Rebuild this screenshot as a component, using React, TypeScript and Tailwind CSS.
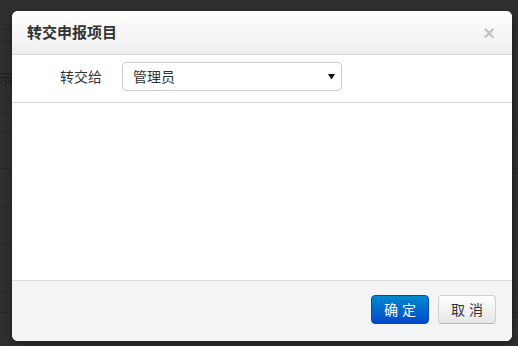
import type { ReactNode } from "react";

const FONT = { fontFamily: '"Noto Sans CJK SC", "Noto Sans", sans-serif' };

function BackdropRows(): ReactNode {
	// dimmed page behind the modal: just the row separators of a table
	return (
		<div className="flex flex-col w-full">
			<div className="h-[30px] border-b border-[#262626]" />
			<div className="h-[12px] border-b border-[#262626]" />
			<div className="h-[72px] border-b border-[#262626] pt-[28px] pl-[0px] relative">
				<span className="absolute left-[-15px] top-[26px] text-[14px] text-[#1e1e1e]">显示</span>
			</div>
			<div className="h-[18px] border-b border-[#262626]" />
			<div className="h-[37px] border-b border-[#262626]" />
			<div className="h-[38px] border-b border-[#262626]" />
			<div className="h-[38px] border-b border-[#262626]" />
			<div className="h-[48px] border-b border-[#262626]" />
			<div className="h-[20px] border-b border-[#262626]" />
		</div>
	);
}

export default function App(): ReactNode {
	return (
		<div className="relative w-[518px] h-[346px] overflow-hidden bg-[#2f2f2f]" style={FONT}>
			<BackdropRows />

			<div className="absolute left-[12px] top-[11px] w-[500px] h-[330px] flex flex-col bg-white rounded-[6px] overflow-hidden shadow-[0_3px_7px_rgba(0,0,0,0.4)]">
				{/* header */}
				<div className="h-[44px] flex items-center justify-between pl-[15px] pr-[17px] border-b border-[#d9d9d9] bg-gradient-to-b from-white to-[#eeeeee]">
					<h3 className="text-[15px] font-bold text-[#333]">转交申报项目</h3>
					<span
						className="text-[20px] font-bold leading-none text-[#c4c4c4]"
						style={{ fontFamily: '"Liberation Sans", sans-serif' }}
					>
						×
					</span>
				</div>

				{/* form row */}
				<div className="h-[48px] flex items-start pt-[7px] border-b border-[#d6d6d6]">
					<label className="w-[90px] h-[29px] flex items-center justify-end text-[14px] text-[#333]">
						转交给
					</label>
					<div className="ml-[20px] w-[220px] h-[29px] flex items-center justify-between pl-[10px] pr-[6px] border border-[#cccccc] rounded-[4px] bg-white">
						<span className="text-[14px] text-[#333]">管理员</span>
						<svg width="7" height="7" viewBox="0 0 7 7">
							<path d="M0 1 H7 L3.5 6.5 Z" fill="#111" />
						</svg>
					</div>
				</div>

				{/* empty body */}
				<div className="flex-1" />

				{/* footer */}
				<div className="h-[61px] flex justify-end items-start gap-[9px] pt-[14px] pr-[16px] border-t border-[#dcdcdc] bg-[#f4f4f4]">
					<button className="w-[58px] h-[29px] flex items-center justify-center gap-[4px] rounded-[4px] border border-[#0a47b5] bg-gradient-to-b from-[#0088cc] to-[#0046cc] text-[14px] text-white">
						<span>确</span>
						<span>定</span>
					</button>
					<button className="w-[58px] h-[29px] flex items-center justify-center gap-[4px] rounded-[4px] border border-[#cfcfcf] border-b-[#b5b5b5] bg-gradient-to-b from-white to-[#e6e6e6] text-[14px] text-[#333]">
						<span>取</span>
						<span>消</span>
					</button>
				</div>
			</div>
		</div>
	);
}
